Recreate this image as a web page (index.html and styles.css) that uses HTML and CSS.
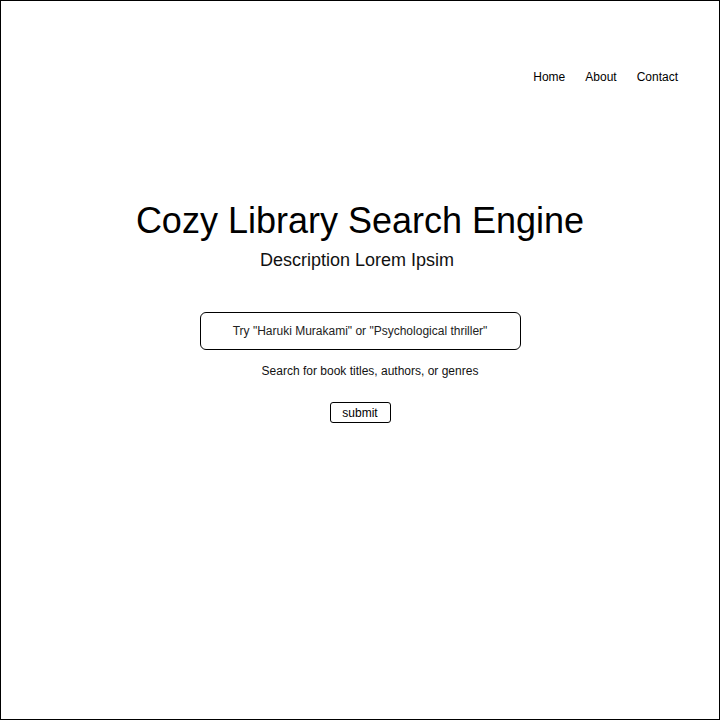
FILE: index.html
```html
<!DOCTYPE html>
<html>
<head>
<meta charset="utf-8">
<link rel="stylesheet" href="styles.css">
</head>
<body>
<div class="frame">
  <nav class="nav">
    <a class="nav-link">Home</a>
    <a class="nav-link">About</a>
    <a class="nav-link">Contact</a>
  </nav>
  <main class="hero">
    <h1 class="title">Cozy Library Search Engine</h1>
    <p class="desc">Description Lorem Ipsim</p>
    <form class="search">
      <input class="search-input" type="text" placeholder="Try &quot;Haruki Murakami&quot; or &quot;Psychological thriller&quot;">
      <p class="hint">Search for book titles, authors, or genres</p>
      <button class="submit" type="button">submit</button>
    </form>
  </main>
</div>
</body>
</html>
```
FILE: styles.css
```css
html, body {
  margin: 0;
  padding: 0;
  background: #fff;
}
body {
  font-family: "Liberation Sans", Arial, sans-serif;
  color: #000;
}
.frame {
  width: 720px;
  height: 720px;
  box-sizing: border-box;
  border: 1px solid #000;
  display: flex;
  flex-direction: column;
}
.nav {
  display: flex;
  justify-content: flex-end;
  gap: 20px;
  padding: 69px 41px 0 0;
}
.nav-link {
  font-size: 12px;
  color: #000;
  text-decoration: none;
}
.hero {
  display: flex;
  flex-direction: column;
  align-items: center;
  padding-top: 116px;
}
.title {
  margin: 0;
  font-size: 36px;
  font-weight: normal;
  line-height: 42px;
}
.desc {
  margin: 7px 0 0 -6px;
  font-size: 18px;
  line-height: 22px;
  color: #111;
}
.search {
  display: flex;
  flex-direction: column;
  align-items: center;
  margin-top: 41px;
}
.search-input {
  width: 321px;
  height: 38px;
  box-sizing: border-box;
  border: 1px solid #000;
  border-radius: 6px;
  text-align: center;
  font-family: "Liberation Sans", Arial, sans-serif;
  font-size: 12px;
  padding: 0;
  outline: none;
}
.search-input::placeholder {
  color: #222;
}
.hint {
  margin: 13px 0 0 20px;
  font-size: 12px;
  line-height: 16px;
  color: #111;
}
.submit {
  margin-top: 23px;
  width: 61px;
  height: 21px;
  box-sizing: border-box;
  background: #fff;
  border: 1px solid #000;
  border-radius: 3px;
  font-family: "Liberation Sans", Arial, sans-serif;
  font-size: 12px;
  color: #000;
  padding: 0;
}
```
